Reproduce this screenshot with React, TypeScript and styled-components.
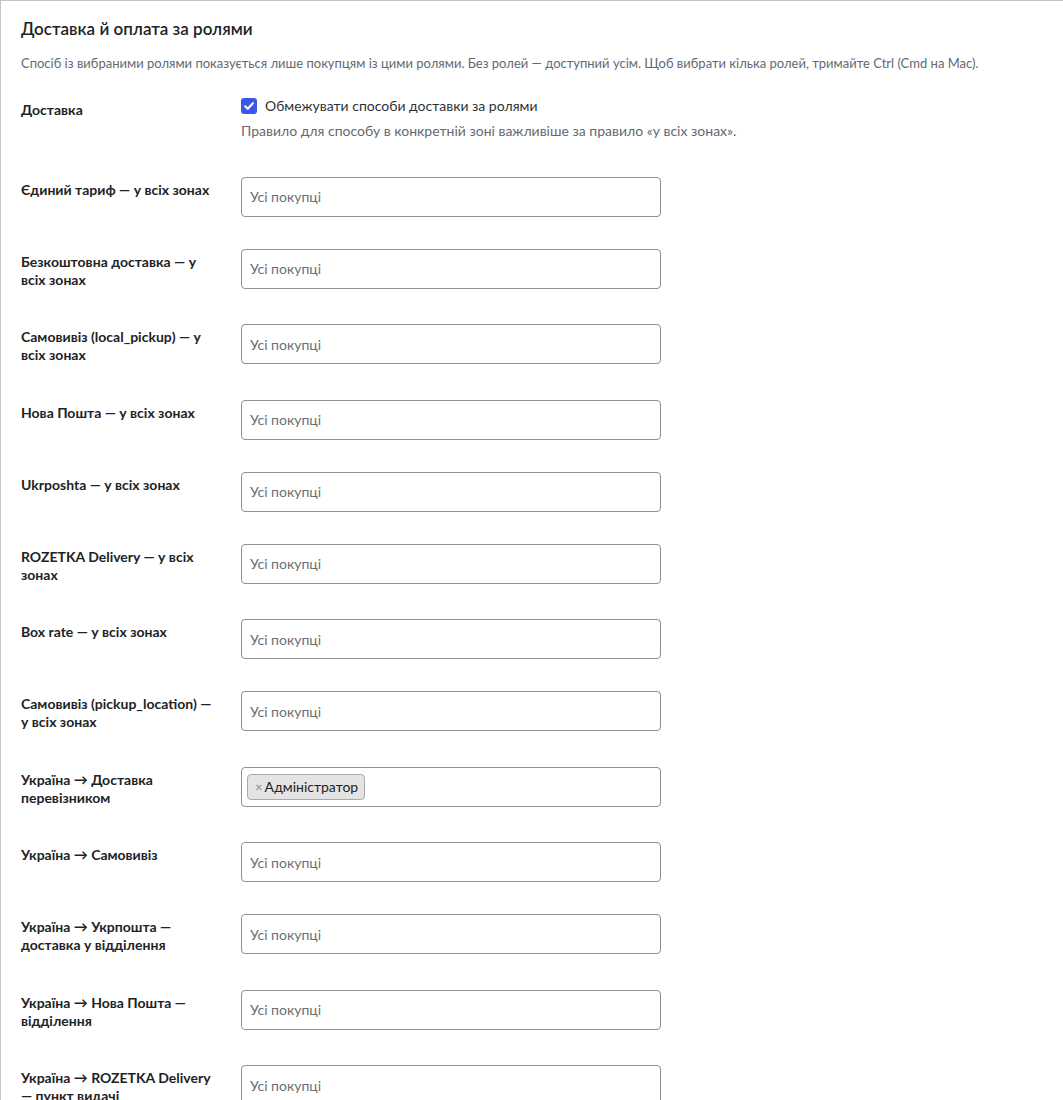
import React from "react";
import styled, { createGlobalStyle } from "styled-components";

const GlobalStyle = createGlobalStyle`
  html, body {
    margin: 0;
    padding: 0;
    background: #ffffff;
  }
  body {
    font-family: "Lato", "Liberation Sans", sans-serif;
    color: #1d2327;
    -webkit-font-smoothing: antialiased;
  }
`;

type MethodRow = { lines: string[]; roles?: string[] };

const rows: MethodRow[] = [
  { lines: ["Єдиний тариф — у всіх зонах"] },
  { lines: ["Безкоштовна доставка — у", "всіх зонах"] },
  { lines: ["Самовивіз (local_pickup) — у", "всіх зонах"] },
  { lines: ["Нова Пошта — у всіх зонах"] },
  { lines: ["Ukrposhta — у всіх зонах"] },
  { lines: ["ROZETKA Delivery — у всіх", "зонах"] },
  { lines: ["Box rate — у всіх зонах"] },
  { lines: ["Самовивіз (pickup_location) —", "у всіх зонах"] },
  { lines: ["Україна → Доставка", "перевізником"], roles: ["Адміністратор"] },
  { lines: ["Україна → Самовивіз"] },
  { lines: ["Україна → Укрпошта —", "доставка у відділення"] },
  { lines: ["Україна → Нова Пошта —", "відділення"] },
  { lines: ["Україна → ROZETKA Delivery", "— пункт видачі"] },
];

const Page = styled.div`
  width: 100%;
  height: 1100px;
  overflow: hidden;
`;

const Card = styled.section`
  width: calc(100% + 40px);
  box-sizing: border-box;
  background: #ffffff;
  border: 1px solid #c3c4c7;
  padding: 17px 20px 40px 20px;
`;

const Title = styled.h2`
  margin: 0 0 13.5px 0;
  font-size: 17px;
  line-height: 22px;
  font-weight: 600;
  color: #1d2327;
`;

const Intro = styled.p`
  margin: 0;
  font-size: 13px;
  line-height: 19.5px;
  color: #646970;
`;

const FormTable = styled.div`
  display: flex;
  flex-direction: column;
`;

const Row = styled.div<{ $first?: boolean }>`
  display: grid;
  grid-template-columns: 220px 420px;
  align-items: start;
  padding: ${(p) => (p.$first ? "0 0 21.4px 0" : "0")};
`;

const Label = styled.div<{ $first?: boolean }>`
  width: 200px;
  font-size: 14px;
  line-height: 18px;
  font-weight: 700;
  color: #1d2327;
  padding: ${(p) => (p.$first ? "27.6px 0 0 0" : "20px 0 19.5px 0")};
`;

const LabelLine = styled.span`
  display: block;
  white-space: nowrap;
`;

const Control = styled.div<{ $first?: boolean }>`
  padding: ${(p) => (p.$first ? "24px 0 0 0" : "16px 0")};
`;

const CheckLine = styled.label`
  display: flex;
  align-items: center;
  gap: 8px;
  height: 18px;
  font-size: 14px;
  line-height: 18px;
  color: #2c3338;
  white-space: nowrap;
`;

const CheckBox = styled.span`
  display: inline-flex;
  align-items: center;
  justify-content: center;
  width: 16px;
  height: 16px;
  box-sizing: border-box;
  border-radius: 3px;
  background: #3858e9;
`;

const Hint = styled.p`
  margin: 6.6px 0 0 0;
  font-size: 14px;
  line-height: 18px;
  color: #646970;
  white-space: nowrap;
`;

const Select = styled.div`
  display: flex;
  align-items: center;
  width: 420px;
  height: 40px;
  box-sizing: border-box;
  border: 1px solid #8c8f94;
  border-radius: 4px;
  background: #ffffff;
  padding: 0 8px 0 5px;
`;

const Placeholder = styled.span`
  padding-left: 3px;
  font-size: 14px;
  color: #6b6f75;
`;

const Chip = styled.span`
  display: inline-flex;
  align-items: center;
  height: 26px;
  box-sizing: border-box;
  border: 1px solid #aaaaaa;
  border-radius: 4px;
  background: #e4e4e4;
  padding: 0 6px 0 7px;
  font-size: 14px;
  color: #1d2327;
`;

const ChipRemove = styled.span`
  color: #8a8a8a;
  font-size: 13px;
  margin-right: 2px;
`;

function RoleSelect({ roles }: { roles?: string[] }) {
  return (
    <Select>
      {roles && roles.length ? (
        roles.map((r) => (
          <Chip key={r}>
            <ChipRemove>×</ChipRemove>
            {r}
          </Chip>
        ))
      ) : (
        <Placeholder>Усі покупці</Placeholder>
      )}
    </Select>
  );
}

export default function App() {
  return (
    <Page>
      <GlobalStyle />
      <Card>
        <Title>Доставка й оплата за ролями</Title>
        <Intro>
          Спосіб із вибраними ролями показується лише покупцям із цими ролями. Без ролей — доступний усім. Щоб вибрати
          кілька ролей, тримайте Ctrl (Cmd на Mac).
        </Intro>
        <FormTable>
          <Row $first>
            <Label $first>Доставка</Label>
            <Control $first>
              <CheckLine>
                <CheckBox>
                  <svg width="12" height="12" viewBox="0 0 12 12" fill="none">
                    <path d="M2.2 6.3 4.8 8.8 9.9 3.2" stroke="#ffffff" strokeWidth="2.1" strokeLinecap="round" strokeLinejoin="round" />
                  </svg>
                </CheckBox>
                Обмежувати способи доставки за ролями
              </CheckLine>
              <Hint>Правило для способу в конкретній зоні важливіше за правило «у всіх зонах».</Hint>
            </Control>
          </Row>
          {rows.map((row) => (
            <Row key={row.lines.join(" ")}>
              <Label>
                {row.lines.map((l) => (
                  <LabelLine key={l}>{l}</LabelLine>
                ))}
              </Label>
              <Control>
                <RoleSelect roles={row.roles} />
              </Control>
            </Row>
          ))}
        </FormTable>
      </Card>
    </Page>
  );
}
